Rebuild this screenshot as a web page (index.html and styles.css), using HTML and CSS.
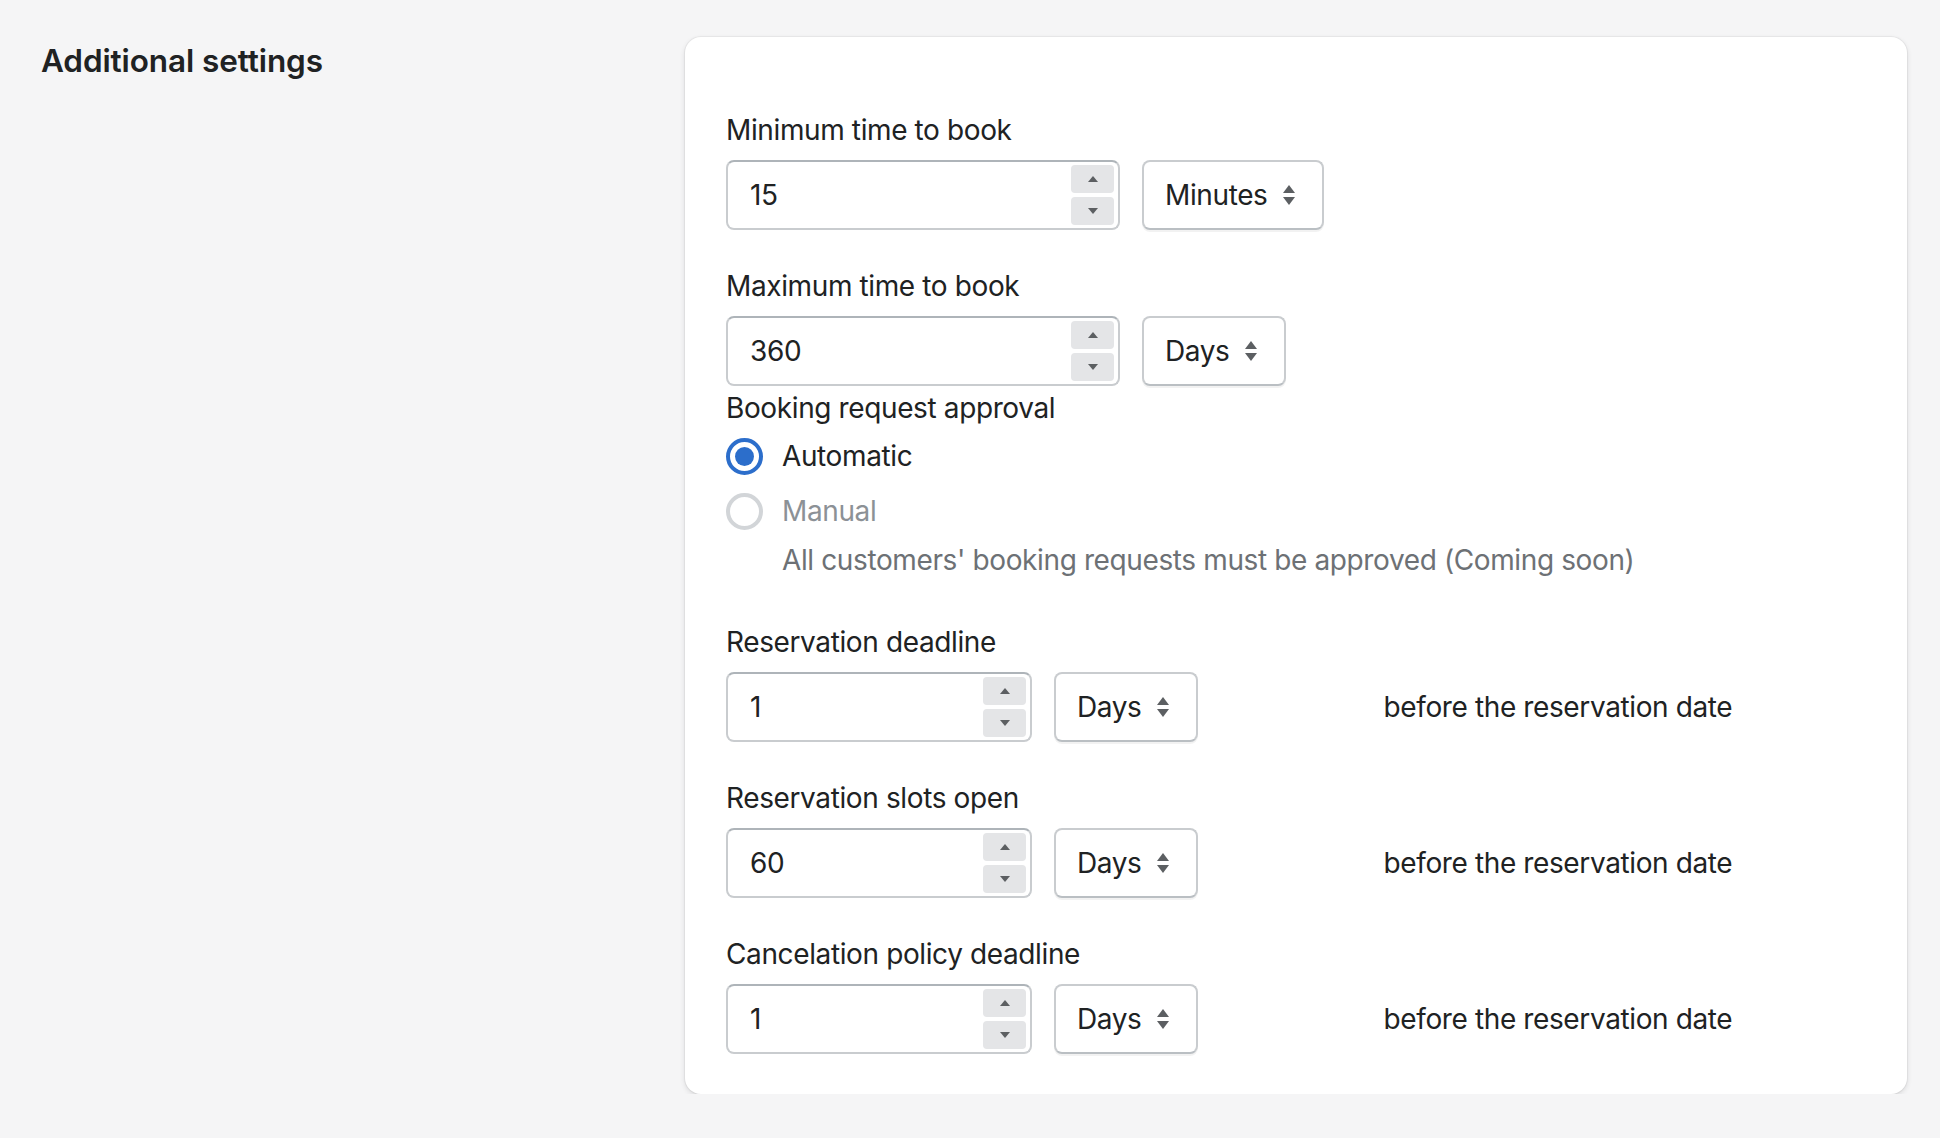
FILE: index.html
```html
<!DOCTYPE html>
<html lang="en">
<head>
<meta charset="utf-8">
<title>Additional settings</title>
<link rel="stylesheet" href="styles.css">
</head>
<body>
<div class="page">
  <div class="aside">
    <h2 class="heading">Additional settings</h2>
  </div>
  <section class="card">
    <div class="field">
      <div class="label">Minimum time to book</div>
      <div class="row">
        <div class="numfield wide">
          <span class="value">15</span>
          <span class="stepper">
            <span class="step"><svg width="10" height="6" viewBox="0 0 10 6"><path d="M0 6 L5 0 L10 6 Z" fill="#5c5f62"/></svg></span>
            <span class="step"><svg width="10" height="6" viewBox="0 0 10 6"><path d="M0 0 L10 0 L5 6 Z" fill="#5c5f62"/></svg></span>
          </span>
        </div>
        <div class="select">
          <span>Minutes</span>
          <svg class="caret" width="12" height="20" viewBox="0 0 12 20"><path d="M0 8 L6 0 L12 8 Z M0 12 L12 12 L6 20 Z" fill="#5c5f62"/></svg>
        </div>
      </div>
    </div>

    <div class="field">
      <div class="label">Maximum time to book</div>
      <div class="row">
        <div class="numfield wide">
          <span class="value">360</span>
          <span class="stepper">
            <span class="step"><svg width="10" height="6" viewBox="0 0 10 6"><path d="M0 6 L5 0 L10 6 Z" fill="#5c5f62"/></svg></span>
            <span class="step"><svg width="10" height="6" viewBox="0 0 10 6"><path d="M0 0 L10 0 L5 6 Z" fill="#5c5f62"/></svg></span>
          </span>
        </div>
        <div class="select">
          <span>Days</span>
          <svg class="caret" width="12" height="20" viewBox="0 0 12 20"><path d="M0 8 L6 0 L12 8 Z M0 12 L12 12 L6 20 Z" fill="#5c5f62"/></svg>
        </div>
      </div>
    </div>

    <div class="approval">
      <div class="label approval-label">Booking request approval</div>
      <div class="choices">
        <div class="choice">
          <span class="radio checked"><span class="dot"></span></span>
          <span class="choice-text">Automatic</span>
        </div>
        <div class="choice disabled">
          <span class="radio"></span>
          <span class="choice-text">Manual</span>
        </div>
        <div class="help">All customers' booking requests must be approved (Coming soon)</div>
      </div>
    </div>

    <div class="field">
      <div class="label">Reservation deadline</div>
      <div class="row">
        <div class="numfield narrow">
          <span class="value">1</span>
          <span class="stepper">
            <span class="step"><svg width="10" height="6" viewBox="0 0 10 6"><path d="M0 6 L5 0 L10 6 Z" fill="#5c5f62"/></svg></span>
            <span class="step"><svg width="10" height="6" viewBox="0 0 10 6"><path d="M0 0 L10 0 L5 6 Z" fill="#5c5f62"/></svg></span>
          </span>
        </div>
        <div class="select">
          <span>Days</span>
          <svg class="caret" width="12" height="20" viewBox="0 0 12 20"><path d="M0 8 L6 0 L12 8 Z M0 12 L12 12 L6 20 Z" fill="#5c5f62"/></svg>
        </div>
        <span class="suffix">before the reservation date</span>
      </div>
    </div>

    <div class="field">
      <div class="label">Reservation slots open</div>
      <div class="row">
        <div class="numfield narrow">
          <span class="value">60</span>
          <span class="stepper">
            <span class="step"><svg width="10" height="6" viewBox="0 0 10 6"><path d="M0 6 L5 0 L10 6 Z" fill="#5c5f62"/></svg></span>
            <span class="step"><svg width="10" height="6" viewBox="0 0 10 6"><path d="M0 0 L10 0 L5 6 Z" fill="#5c5f62"/></svg></span>
          </span>
        </div>
        <div class="select">
          <span>Days</span>
          <svg class="caret" width="12" height="20" viewBox="0 0 12 20"><path d="M0 8 L6 0 L12 8 Z M0 12 L12 12 L6 20 Z" fill="#5c5f62"/></svg>
        </div>
        <span class="suffix">before the reservation date</span>
      </div>
    </div>

    <div class="field">
      <div class="label">Cancelation policy deadline</div>
      <div class="row">
        <div class="numfield narrow">
          <span class="value">1</span>
          <span class="stepper">
            <span class="step"><svg width="10" height="6" viewBox="0 0 10 6"><path d="M0 6 L5 0 L10 6 Z" fill="#5c5f62"/></svg></span>
            <span class="step"><svg width="10" height="6" viewBox="0 0 10 6"><path d="M0 0 L10 0 L5 6 Z" fill="#5c5f62"/></svg></span>
          </span>
        </div>
        <div class="select">
          <span>Days</span>
          <svg class="caret" width="12" height="20" viewBox="0 0 12 20"><path d="M0 8 L6 0 L12 8 Z M0 12 L12 12 L6 20 Z" fill="#5c5f62"/></svg>
        </div>
        <span class="suffix">before the reservation date</span>
      </div>
    </div>
  </section>
</div>
</body>
</html>
```

FILE: styles.css
```css
* {
  box-sizing: border-box;
}

html, body {
  margin: 0;
  padding: 0;
}

body {
  background: #f5f5f6;
  color: #202223;
  font-family: Inter, "Noto Sans", "Liberation Sans", sans-serif;
  font-size: 28px;
  line-height: 40px;
  letter-spacing: -0.38px;
}

.page {
  display: flex;
  align-items: flex-start;
  padding: 37px 33px 0 41px;
}

.aside {
  width: 644px;
  flex: none;
}

.heading {
  margin: 4px 0 0 0;
  font-size: 31.5px;
  line-height: 40px;
  font-weight: 600;
  letter-spacing: -0.1px;
  color: #202223;
}

.card {
  flex: 1;
  background: #ffffff;
  border-radius: 16px;
  box-shadow: 0 0 0 1px rgba(63, 63, 68, 0.05), 0 2px 5px rgba(63, 63, 68, 0.16);
  padding: 73px 40px 40px 41px;
}

.field + .field {
  margin-top: 36px;
}

.label {
  line-height: 40px;
  margin-bottom: 10px;
}

.row {
  display: flex;
  align-items: center;
  gap: 22px;
}

.numfield {
  display: flex;
  align-items: center;
  height: 70px;
  border: 2px solid #c9cccf;
  border-top-color: #aeb4b9;
  border-radius: 8px;
  padding: 0 4px 0 22px;
  background: #fff;
}

.numfield.wide {
  width: 394px;
}

.numfield.narrow {
  width: 306px;
}

.value {
  flex: 1;
}

.stepper {
  display: flex;
  flex-direction: column;
  gap: 4px;
}

.step {
  width: 43px;
  height: 28px;
  border-radius: 4px;
  background: #e4e5e7;
  display: flex;
  align-items: center;
  justify-content: center;
}

.select {
  display: flex;
  align-items: center;
  gap: 15px;
  height: 70px;
  border: 2px solid #c9cccf;
  border-bottom-color: #babfc3;
  border-radius: 8px;
  box-shadow: 0 2px 0 rgba(0, 0, 0, 0.05);
  padding: 0 27px 0 21px;
  background: #fff;
}

.caret {
  display: block;
}

.suffix {
  margin-left: 164px;
}

.approval {
  margin-top: 2px;
}

.approval-label {
  margin-bottom: 8px;
}

.choices {
  display: flex;
  flex-direction: column;
}

.choice {
  display: flex;
  align-items: center;
  gap: 19px;
  height: 40px;
}

.choice + .choice {
  margin-top: 15px;
}

.radio {
  width: 37px;
  height: 37px;
  border-radius: 50%;
  border: 4px solid #d2d5d8;
  background: #fff;
  display: flex;
  align-items: center;
  justify-content: center;
  flex: none;
}

.radio.checked {
  border-color: #2c6ecb;
}

.dot {
  width: 19px;
  height: 19px;
  border-radius: 50%;
  background: #2c6ecb;
}

.choice.disabled .choice-text {
  color: #8c9196;
}

.help {
  margin-top: 9px;
  padding-left: 56px;
  color: #6d7175;
  line-height: 40px;
}

.approval + .field {
  margin-top: 42px;
}
```
